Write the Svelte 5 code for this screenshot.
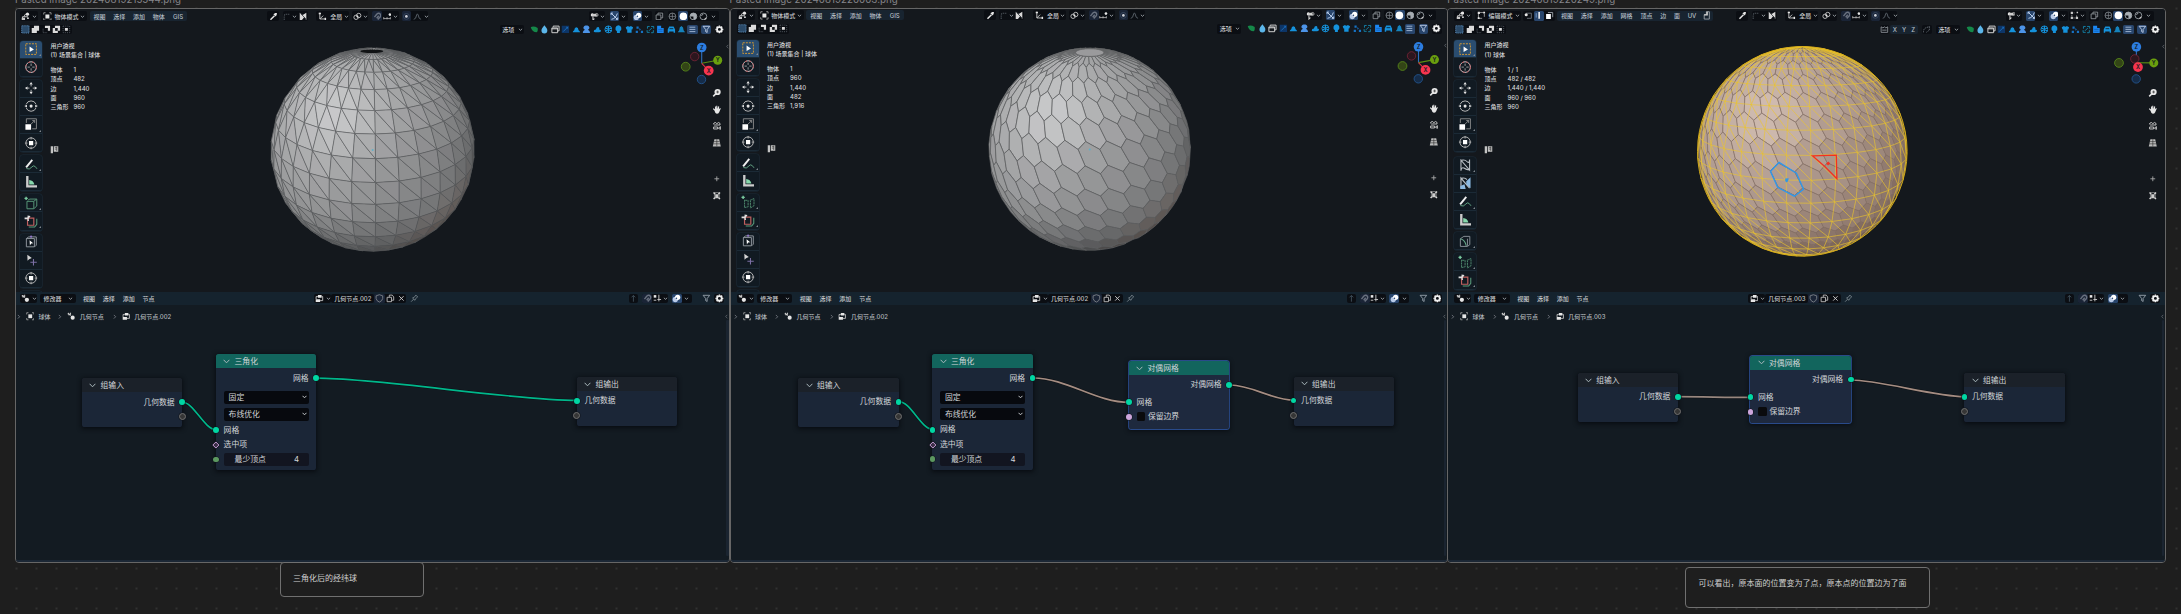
<script>
  const W = '#e6e6e6', B = '#1592dc';
  const s = (d, c = W, w = 1.2, extra = '') => `<path d="${d}" fill="none" stroke="${c}" stroke-width="${w}" ${extra}/>`;
  const f = (d, c = W) => `<path d="${d}" fill="${c}"/>`;
  const c = (x, y, r, col = W) => `<circle cx="${x}" cy="${y}" r="${r}" fill="${col}"/>`;
  const ring = (x, y, r, col = W, w = 1.2, extra = '') => `<circle cx="${x}" cy="${y}" r="${r}" fill="none" stroke="${col}" stroke-width="${w}" ${extra}/>`;
  const dash = (n) => `stroke-dasharray="${n}"`;
  const corners = (col) => s('M1 3.5V1H3.5M8.5 1H11V3.5M11 8.5V11H8.5M3.5 11H1V8.5', col, 1.1);

  const icons = {
    chev: s('M3.2 4.8L6 7.4L8.8 4.8', '#a2a8ae', 1.5),
    right: s('M4 2L8 6L4 10', '#a2a8ae', 1.3),
    left: s('M8 2L4 6L8 10', '#8b9198', 1.3),
    editor: s('M2 9V6.5H9.5M4 6.5L6 3H9', '#c9c9c9', 1.3) + c(8.8, 3, 2.2) + f('M1 8H5.5V11H1Z', '#c9c9c9') + c(9.5, 8.5, 1.2),
    object: f('M3.3 3.3H8.7V8.7H3.3Z') + corners('#aaa'),
    edit: s('M2 4V10M4 2H9M2 10H7M10 4V8', '#bbb', 1) + f('M1 1H4V4H1ZM8.5 1H11V3.5H8.5ZM1 8.5H3.5V11H1Z'),
    dropper: s('M2 10.5L7.5 5', W, 2) + f('M6 3L8.5 1.5L10.8 1.3L10.5 4L9 6.2Z'),
    corner: s('M3 11V6Q3 3 6 3H10', '#4c535a', 1.5, dash('2 1')),
    mask: f('M1 1L5 4L10 1V11L7 7L4 11H1Z', '#d8d8d8') + s('M2 2L10 10', '#20262c', 1),
    axes: s('M2.5 1V9.5H11M2.5 9.5L7 5', '#d0d0d0', 1.2) + f('M1 1H4V3H1ZM9 8H11V11H9Z'),
    pivot: ring(4.2, 7.2, 3, '#c9c9c9') + ring(7.8, 4.8, 3, '#c9c9c9') + c(6, 6, 1),
    magnet: s('M2 7L5 3.2Q8 0.5 10 3Q11.5 5.5 8.5 8L6.5 10.3M5 8.5L7.8 5.2', '#69717f', 1.9),
    snapinc: s('M1 9H10M1 7V10M5.5 7V10M10 7V10', '#bbb', 1.1) + c(9.5, 3.5, 1.8),
    dot: ring(6, 6, 4, '#3f5068', 1) + c(6, 6, 1.8, '#cfd3dc'),
    curve: s('M1 10Q4 10 5 4Q6 1 7 4Q8 10 11 10', '#5a6169', 1.3),
    visible: c(3.2, 4, 2.2) + f('M2 4Q6 1 10 4L8 6H5Z', '#ccc') + s('M4 6V11L6 9', '#d5d5d5', 1.4) + ring(9, 4, 2, '#d5d5d5', 1),
    gizmo: s('M2 10Q8 9 10 2M2 2L10 10M8 10H10.5V7.5M1.5 4V1.5H4', '#cfe2ff', 1.2),
    overlay: c(4.5, 7.5, 3.6, '#b9cbe8') + c(7.7, 4.5, 3.6, '#fff') + c(6, 6, 1.1, '#31507c'),
    meshopt: s('M2.5 2.5V9.5H9V5M2.5 2.5H6', '#aaa', 1, dash('2 1')) + f('M1 1H4V4H1ZM8 8H11V11H8ZM1 8H4V11H1ZM9 1H11V3H9Z', '#c8c8c8'),
    xray: s('M1.5 4H8V10.5H1.5ZM4 4V1.5H10.5V8H8', '#9aa0a6', 1.1),
    wire: ring(6, 6, 4.6, '#80868c') + s('M6 1.5V10.5M1.5 6H10.5', '#80868c', 1),
    solid: c(6, 6, 5.2, '#fff'),
    matprev: ring(6, 6, 4.6, '#a6acb2') + f('M6 1.5A4.5 4.5 0 0 0 1.5 6H6V10.5A4.5 4.5 0 0 0 6 1.5Z', '#a6acb2'),
    render: ring(6, 6, 4.6, '#9aa0a6') + s('M3.4 5.5A3 3 0 0 1 6 3', '#9aa0a6', 1.2) + f('M6 10.5L10 7V10Z', '#ccc'),
    selbox: `<rect x="1" y="1" width="10" height="10" fill="#2b4a68" stroke="#6ea6d8" stroke-width="1" stroke-dasharray="1.5 1"/>`,
    seladd: f('M1 4H4V1H11V8H8V11H1Z', '#dcdcdc'),
    selsub: f('M4 1H11V8H8V4H4Z', '#dcdcdc') + s('M1.5 5V10.5H7', '#626a72', 1, dash('1.5 1')),
    selxor: f('M1 4H4V1H11V8H8V11H1ZM5 5V7.5H7V5Z', '#dcdcdc') + f('M4.2 4.2H7.8V7.8H4.2Z', '#14181d'),
    selint: f('M4 4H8V8H4Z', '#dcdcdc') + s('M1.5 1.5H10.5V10.5H1.5Z', '#626a72', 1, dash('1.5 1.4')),
    vert: s('M3 3H10V10H4', '#767d84', 1.1) + c(3, 5, 2.1),
    edge: s('M7 1.5V10.5', '#fff', 2) + s('M3 3V9', '#8fb2dc', 1),
    face: f('M1.5 4H8V11H1.5Z', '#fff') + s('M4 2H10.5V8.5', '#979da3', 1.3),
    weld: s('M3 11H10V1H6V5H3Z', '#aab0b6', 1.1) + f('M6 1H8V6H3V4.5H6Z', '#cfcfcf'),
    leaf: f('M1 3Q5 1 10.5 4Q11 9 9 10Q3 10 1 3Z', '#158849'),
    drop: f('M6 0.5Q10.2 5.5 10 7.5A4 4 0 0 1 2 7.5Q1.8 5.5 6 0.5Z', '#5cb6ea'),
    windows: s('M3 3V1.5H11V8H9.5M1.2 4H9V10.5H1.2ZM1.2 5.2H9', '#d5d5d5', 1.3),
    tex: f('M1 1H11V11H1Z', '#0d3567') + s('M3 9L9 3M7 3H9V5', '#1b6fbe', 1.2),
    dome: f('M1 10Q1 8 3 7Q3.5 3 6 3Q8.5 3 9 7Q11 8 11 10Z', B),
    person: f('M6 0.8A2.9 2.9 0 0 1 8 6.4Q11 7.5 11 11H1Q1 7.5 4 6.4A2.9 2.9 0 0 1 6 0.8Z', '#4d94e8'),
    cloud: f('M1 9Q1 6 4 6Q5 2 8 3Q9 4 8.5 6Q11 6 11 8.2Q10 10 8 10H3Q1 10 1 9Z', B),
    fan: ring(6, 6, 4.7, B, 1.3) + s('M6 1.5V10.5M2 4L10 8M2 8L10 4', B, 1.6),
    bulb: f('M6 0.5A4.3 4.3 0 0 1 8 8.5V11H4V8.5A4.3 4.3 0 0 1 6 0.5Z', B),
    shirt: f('M1 3L4 1.5Q6 3 8 1.5L11 3L10 6H9V10.5H3V6H2Z', B),
    parts: f('M2 2H5V5H2ZM6 4L8 6L6 8ZM1 8H4V11H1ZM8 8H11V11H8Z', '#1672c4'),
    shuffle: s('M2 5V2H5M7 2H10.5V5M10 7V10.5H7M5 10H1.5V7M4 8L8 4', '#138bb4', 1.2),
    build: f('M1.5 1H7V4H10.5V11H1.5Z', '#1b86f2') + s('M3 6H9M3 8.5H9', '#0c4b8e', .7),
    car: f('M1 6L3 2H9L11 6V10.5H9V9H3V10.5H1Z', B) + s('M3.5 5H8.5', '#0b2a40', 1.3),
    bell: f('M6 1.5Q9 3 9 7L11 10H1L3 7Q3 3 6 1.5Z', '#1583bd'),
    menu: s('M2 3H10M2 6H10M2 9H10', '#b6c9e4', 1.1),
    filter: s('M1.5 1.8H10.5L7 6.2V10.2L5 9V6.2Z', '#c4d3ea', 1.2),
    filterg: s('M1.5 1.8H10.5L7 6.2V10.2L5 9V6.2Z', '#9aa4ae', 1.2),
    gear: ring(6, 6, 3.2, '#f0f0f0', 2.4) + s('M6 .6V2.4M6 9.6V11.4M.6 6H2.4M9.6 6H11.4M2.2 2.2L3.4 3.4M8.6 8.6L9.8 9.8M9.8 2.2L8.6 3.4M2.2 9.8L3.4 8.6', '#f0f0f0', 2),
    mirror: s('M1.5 2.5L4 4L6 2.5L8 4L10.5 2.5V10H1.5ZM3 7H9', '#8f959b', 1.2),
    automerge: s('M2 10Q2 5 5 4L10 2M10 2V7L6 10', '#6b737b', 1.2, dash('2 1')),
    modifier: c(8, 8, 2.9) + s('M2 2L5 5M2 4H5V1', '#c8c8c8', 1.4) + c(2.2, 2.5, 1.3, '#c8c8c8'),
    nodes: f('M4 1.5H9V5H4ZM1 7.2H7V11H1Z') + s('M9 3.5H10.5V9H7M1.5 7V3.5H4', '#c8c8c8', 1.2),
    shield: s('M6 1L10.5 2.5V6Q10 9.5 6 11Q2 9.5 1.5 6V2.5Z', '#7e848a', 1.2),
    copy: s('M1.5 4.5H7.5V10.5H1.5ZM4.5 4V1.5H8.5L10.5 4V8.5H8', '#c0c0c0', 1.2),
    close: s('M3 3L9 9M9 3L3 9', '#c8c8c8', 1.3),
    pin: s('M1.5 10.5L5 7M3.5 5.5L6.8 8.6L7.5 6.5L10.5 4L8 1.5L5.8 4.5Z', '#77848c', 1.2),
    up: s('M6 10.5V2M3.5 4.5L6 2L8.5 4.5', '#3e4d58', 1.3),
    snapgrid: f('M1 1.5H4.5V5H1Z') + s('M8 1V10M6 7.5H11M1 8.5H4.5', '#c5c5c5', 1.3),
    t_select: s('M1.5 1.5H10.5V10.5H1.5Z', '#d59b35', .8, dash('1.7 .9')) + f('M4.7 3.8L8.4 6.3L4.7 8.4Z', '#fff'),
    t_cursor: ring(6, 6, 4.5, '#d8d8d8', .8) + ring(6, 6, 4.5, '#b8484e', .8, dash('1.8 1.8')) + s('M6 3V5M6 7V9M3 6H5M7 6H9', '#ccc', .6),
    t_move: f('M6 .8L7.4 3H4.6ZM6 11.2L7.4 9H4.6ZM.8 6L3 4.6V7.4ZM11.2 6L9 4.6V7.4Z') + s('M6 3V4.6M6 7.4V9M3 6H4.6M7.4 6H9', '#ccc', .7),
    t_rotate: s('M1.8 4.5A4.5 4.5 0 0 1 10.2 4.5M10.2 7.5A4.5 4.5 0 0 1 1.8 7.5', '#bbb', .8) + c(6, 6, 1.3) + f('M.3 6L2.5 4.8V7.2ZM11.7 6L9.5 4.8V7.2Z'),
    t_scale: s('M2 5V1.5H10.5V10H7M6 6L9 3M7 3H9V5', '#999', .7) + f('M1.2 6.2H6V10.8H1.2Z', '#fff'),
    t_xform: ring(6, 6, 4.4, '#bbb', .8) + f('M4.2 4.2H7.8V7.8H4.2Z', '#fff') + s('M6 .8V3M6 9V11.2M.8 6H3M9 6H11.2', '#bbb', .7),
    t_note: s('M1.8 8.7L7 2.4', '#f0f0f0', 1.6) + s('M2 9.8Q5 10.8 6 9Q8 6.5 9.4 8L11 10', '#65a786', .8),
    t_measure: f('M1.8 .8H3.8V8.7H11V10.6H1.8Z', '#ccc') + f('M4.4 4.2Q8 4.5 8.8 8.1H4.4Z', '#86d7ab'),
    t_cube: s('M2.5 4.5H8.3V10.8H2.5ZM3.2 3.5L5 2.6H10.8V8.5L8.6 10.5M8.5 4.3L10.5 2.8', '#5a9c7c', .8) + s('M1.8 .6V3.4M.4 2H3.2', '#79c89e', 1.2),
    t_cubes: s('M3 4V10.6M3 10.6L6 10V4.5H3M7.5 4.6L11 3V9L8 11V5', '#4f8a6e', .8, dash('1.8 .5')) + s('M1.8 .6V3.4M.4 2H3.2', '#79c89e', 1.2),
    t_bool: s('M3 3.5H8.3V9.5H3Z', '#c0605f', 1) + s('M4 11H9L10.8 8.7V4', '#5a9c7c', .9) + f('M.5 3H3V1.2L5.5 1.6L4 4L4.2 6H3V4.5H.5Z', '#dedede'),
    t_cage: s('M2 3H8.8V10H2ZM2 3L4 1.6H10.4V8.6L9 10', '#9298a0', .8) + f('M4.7 4.5L7.8 7L6 7.2L5 8.8Z', '#fff') + c(6, 1.4, .9, '#9278c9'),
    t_arrow: f('M2.8 1.5L6.6 4.3L4.3 5.2L3 6.6Z', '#d5d5d5') + s('M8 5V10.6M5.4 7.8H10.8', '#7c6fa5', .9),
    t_bend: s('M2.5 10.8V1.8L9.8 10.2V1.2M2.5 2Q6 1 7.5 3Q9 5 9.8 2M2.5 10.5Q3 7.5 5 8.5Q7 10 9.8 10.2', '#b9bfc5', .9),
    t_bendb: s('M2.5 10.8V1.8L9.8 10.2M2.5 2Q6 1 7.5 3', '#b9bfc5', 1) + f('M7 4.5L10.6 1V10.4L7 7ZM2 8.4L5.5 7L6.5 11H2Z', '#8bb9e2'),
    t_poly: s('M2 4L5 2H10V9L8 10.5H2ZM8 4V10', '#8b9198', .8) + s('M2 4Q6 5 7 10', '#66a688', .9),
    magnify: c(7, 5, 3.9) + s('M1.5 10.5L5 7', W, 1.9) + s('M5.3 5H8.7M7 3.3V6.7', '#333', .9),
    hand: f('M3 7L1 5L2.2 4L3.8 5.5V2L5 2L5.3 5V1H6.6L6.8 5L7.8 1.6L9 2L8.6 5.5L10 3.8L11 4.5L9 9Q8 11 6 11Q4 11 3 7Z'),
    camera: s('M2.5 2.5Q5 .8 6 3.5Q8 .5 10 3V5H3Q1 4 2.5 2.5M2 7.5H7V10H2ZM8 9L10.5 7V10.5Z', '#c5c5c5', 1.2),
    persp: f('M3 1.5H9L11 10.5H1Z', '#bababa') + s('M6 1.5V10.5M2.5 4.5H9.5M1.7 7.3H10.3', '#222', .7),
    plus: s('M6 3V9M3 6H9', '#adadad', 1.1),
    frame: s('M2 2L4 4M10 2L8 4M2 10L4 8M10 10L8 8', '#ddd', 1.8) + f('M4 4H8V9H4Z', '#ccc') + s('M2 2H10M3 4V9M9 4V9', '#aaa', .8),
    panelicon: f('M1 1.5H4V11H1ZM5 1.5H11V9H5Z', '#c4c4c4') + s('M6.5 3.5H9.5M6.5 5.5H9.5M9 2V8', '#333', .8)
  };

  // Header layout: each group is [gap before, style, cells]; each cell is [icon or text, width].
  const midGroups = [
    [3.3, 'dark', [['corner', 8], ['chev', 8], ['mask', 9]]],
    [8.7, 'dark', [['axes', 13], ['=全局', 14], ['chev', 6]]],
    [3, 'dark', [['pivot', 11], ['chev', 5]]],
    [3.7, 'dark', [['magnet', 10, 'navy'], ['snapinc', 10], ['chev', 6.6]]],
    [3.7, 'dark', [['dot', 8.6, 'navy'], ['curve', 13.4], ['chev', 4]]]
  ];
  const objectLeft = [
    [0, 'dark', [['editor', 11], ['chev', 6.5]]],
    [3, 'dark', [['object', 13.3], ['=物体模式', 24.5], ['chev', 8.5]]],
    [2.4, 'menu', [['=视图', 19.8], ['=选择', 19.8], ['=添加', 19.8], ['=物体', 19.8], ['=GIS', 18.5]]],
    [80, 'dark', [['dropper', 12]]],
    ...midGroups
  ];
  const editLeft = [
    [0, 'dark', [['editor', 11], ['chev', 6.5]]],
    [3, 'dark', [['edit', 13.3], ['=编辑模式', 24.5], ['chev', 8.5]]],
    [1.7, 'dark', [['vert', 10.6], ['edge', 10.6, 'blue'], ['face', 10.6]]],
    [2.2, 'menu', [['=视图', 19.9], ['=选择', 19.9], ['=添加', 19.9], ['=网格', 19.9], ['=顶点', 19.9], ['=边', 13.8], ['=面', 13.8], ['=UV', 16], ['weld', 13]]],
    [23.4, 'dark', [['dropper', 12]]],
    ...midGroups
  ];
  const shading = [3.4, 'dark', [['wire', 10.3], ['solid', 10.3, 'blue'], ['matprev', 10.3], ['render', 10.3], ['chev', 10]]];
  const rightStart = [
    [0, 'dark', [['visible', 10], ['chev', 6]]],
    [4.5, 'dark', [['gizmo', 9, 'blue'], ['chev', 9]]],
    [5, 'dark', [['overlay', 9, 'blue'], ['chev', 10]]]
  ];
  const objectRight = [...rightStart, [3.6, 'dark', [['xray', 9]]], shading];
  const editRight = [...rightStart, [1, 'dark', [['meshopt', 10], ['chev', 7]]], [3, 'dark', [['xray', 10]]], shading];
  const selRow = [[0, 'dark', ['selbox', 'seladd', 'selsub', 'selxor', 'selint'].map((n) => [n, 10.3])]];
  const addons = ['leaf', 'drop', 'windows', 'tex', 'dome', 'person', 'cloud', 'fan', 'bulb', 'shirt', 'parts', 'shuffle', 'build', 'car', 'bell'];
  const optRow = [
    [0, 'dark', [['=选项', 17], ['chev', 7]]],
    [5, '', [...addons.map((n) => [n, 10.55]), ['menu', 10.55, 'blue']]],
    [3.6, 'blue', [['filter', 9.4]]],
    [4, 'dark', [['gear', 9.4]]]
  ];
  const symRow = [
    [0, 'dark', [['mirror', 9]]],
    [1, 'menu', [['=X', 9.2], ['=Y', 9.2], ['=Z', 9.2]]],
    [4, 'dark', [['automerge', 10]]],
    [4, '', []],
    ...optRow
  ];
  const nodeLeft = [
    [0, 'dark', [['modifier', 11], ['chev', 6]]],
    [2.7, 'dark', [['=修改器', 25], ['chev', 10.5]]],
    [3.6, '', [['=视图', 19.8], ['=选择', 19.8], ['=添加', 19.8], ['=节点', 19.8]]]
  ];
  const nodeMid = (name) => [
    [156, 'dark', [['nodes', 11], ['chev', 6]]],
    [0, 'dark', [['=' + name, 43]]],
    [0, 'dark', [['shield', 10.7, 'navy'], ['copy', 10.7], ['close', 10.7]]],
    [2.7, '', [['pin', 10]]]
  ];
  const nodeRight = [
    [0, 'dark', [['up', 9]]],
    [4, 'dark', [['magnet', 10, 'navy'], ['snapgrid', 10], ['chev', 6]]],
    [3.6, 'dark', [['overlay', 9.6, 'blue'], ['chev', 10.4]]],
    [9, '', [['filterg', 10.5]]],
    [3, 'dark', [['gear', 10]]]
  ];

  const objectTools = [['t_select', 't_cursor'], ['t_move', 't_rotate', 't_scale', 't_xform'], ['t_note', 't_measure'], ['t_cube', 't_bool'], ['t_cage', 't_arrow', 't_xform']];
  const dualTools = objectTools.map((g) => g.map((n) => (n === 't_cube' ? 't_cubes' : n)));
  const editTools = [['t_select', 't_cursor'], ['t_move', 't_rotate', 't_scale', 't_xform'], ['t_bend', 't_bendb', 't_note', 't_measure'], ['t_poly'], ['t_cubes', 't_bool']];
  const flyouts = ['t_select', 't_scale', 't_note', 't_cube', 't_cubes', 't_bool', 't_bend', 't_poly'];

  // 32 x 16 UV sphere in a perspective camera
  const DIST = 4.876, STEP = Math.PI / 16;
  function sphere(kind, cx, cy, r, elev, azim) {
    const F = (r / 102) * 486.8;
    const e = (elev * Math.PI) / 180, az = (azim * Math.PI) / 180;
    const point = (i, j) => {
      const lat = Math.PI / 2 - j * STEP, lon = i * STEP + az;
      const x = Math.cos(lat) * Math.sin(lon), y = Math.sin(lat), z = Math.cos(lat) * Math.cos(lon);
      return [x, y * Math.cos(e) - z * Math.sin(e), y * Math.sin(e) + z * Math.cos(e)];
    };
    const mean = (ps) => [0, 1, 2].map((k) => ps.reduce((a, p) => a + p[k], 0) / ps.length);
    const unit = (v) => { const l = Math.hypot(...v) || 1; return v.map((q) => q / l); };
    const proj = (p) => [cx + (F * p[0]) / (DIST - p[2]), cy - (F * p[1]) / (DIST - p[2])];
    const facing = (m) => { const n = unit(m); return n[2] * (DIST - m[2]) - n[0] * m[0] - n[1] * m[1] > 0; };
    const path = (ps) => 'M' + ps.map((p) => proj(p).map((v) => v.toFixed(1)).join(' ')).join('L') + 'Z';

    const up = (i, j) => (j === 0 ? mean([point(0, 0), point(i, 1), point(i + 1, 1)]) : mean([point(i, j), point(i + 1, j), point(i + 1, j + 1)]));
    const low = (i, j) => (j === 15 ? mean([point(0, 16), point(i, 15), point(i + 1, 15)]) : mean([point(i, j), point(i, j + 1), point(i + 1, j + 1)]));
    const tris = [], duals = [];
    for (let j = 0; j < 16; j++) for (let i = 0; i < 32; i++) {
      if (j < 15) tris.push([point(i, j), point(i, j + 1), point(i + 1, j + 1)]);
      if (j > 0) tris.push([point(i, j), point(i + 1, j), point(i + 1, j + 1)]);
    }
    for (let j = 1; j < 16; j++) for (let i = 0; i < 32; i++) {
      const ring = [];
      if (j > 1) ring.push(up(i - 1, j - 1), low(i, j - 1)); else ring.push(up(i - 1, 0), up(i, 0));
      if (j < 15) ring.push(up(i, j), low(i, j), up(i - 1, j)); else ring.push(low(i, 15), low(i - 1, 15));
      if (j > 1) ring.push(low(i - 1, j - 1));
      duals.push(order(ring, point(i, j)));
    }
    duals.push(Array.from({ length: 32 }, (_, i) => up(i, 0)));

    function order(ps, centre) {
      const n = unit(centre), a = unit([n[2], 0, -n[0]]);
      const b = [n[1] * a[2] - n[2] * a[1], n[2] * a[0] - n[0] * a[2], n[0] * a[1] - n[1] * a[0]];
      const ang = (p) => Math.atan2(p[0] * b[0] + p[1] * b[1] + p[2] * b[2], p[0] * a[0] + p[1] * a[1] + p[2] * a[2]);
      return [...ps].sort((p, q) => ang(p) - ang(q));
    }
    function shade(m) {
      const n = unit(m);
      const d = -0.27 * n[0] + 0.27 * n[1] + 0.92 * n[2];
      let v = 0.2 + 0.44 * Math.pow(d * 0.5 + 0.5, 1.5) + 0.1 * Math.pow(Math.max(0, d), 14);
      v += 0.09 * Math.max(0, -n[0]) + 0.08 * Math.max(0, n[1]) - 0.14 * Math.max(0, -n[1] - 0.5);
      const warm = Math.max(0, n[0] - n[1] - 0.95) * 0.16;
      let rgb = [v + warm * 0.5, v + 0.003, v - warm * 0.3 + 0.008];
      if (kind === 'edit') rgb = [v * 0.72 + 0.25, v * 0.74 + 0.155, v * 0.74 + 0.11];
      return `rgb(${rgb.map((q) => Math.round(q * 255)).join(',')})`;
    }
    const faces = (list) => list.map((ps) => ({ ps, m: mean(ps) })).filter((q) => facing(q.m)).map((q) => ({ d: path(q.ps), fill: shade(q.m) }));
    const base = faces(kind === 'tri' ? tris : duals);
    const wire = kind === 'edit' ? faces(tris).map((q) => q.d).join('') : '';
    return { kind, base, wire, cx, cy, r };
  }
  const edges = { tri: ['#56595b', 0.5], dual: ['#5e6062', 0.7], edit: ['#897469', 0.65] };

  const input = (x, y) => ({ type: 'input', x, y });
  const panels = [
    {
      file: 'Pasted image 20240819215544.png', x: 15, w: 715, pad: 4.4, dy: 0, right: 10.2,
      left1: objectLeft, right1: objectRight, row2: optRow, tools: objectTools, title: '(1) 场景集合 | 球体',
      stats: [['物体', '1'], ['顶点', '482'], ['边', '1,440'], ['面', '960'], ['三角形', '960']],
      tree: '几何节点.002', ball: sphere('tri', 372.6, 149.7, 102, 26.6, 1.4), gz: [701.7, 63.3, 16, -3, 7, 7.3],
      nodes: [input(82, 378.3), { type: 'tri', x: 216, y: 354.3 }, { type: 'output', x: 576.8, y: 377 }],
      links: [['#00b78b', 182, 402, 216, 429.6, 0.35], ['#00b78b', 316.3, 378.2, 576.8, 400.4, 0.25]]
    },
    {
      file: 'Pasted image 20240819220003.png', x: 729.5, w: 718, pad: 6.6, dy: -0.8, right: 11,
      left1: objectLeft, right1: objectRight, row2: optRow, tools: dualTools, title: '(1) 场景集合 | 球体',
      stats: [['物体', '1'], ['顶点', '960'], ['边', '1,440'], ['面', '482'], ['三角形', '1,916']],
      tree: '几何节点.002', ball: sphere('dual', 1089.2, 149.2, 101.8, 26.6, 1.4), gz: [1418, 62.6, 16, -3, 7, 7.3],
      nodes: [input(798.4, 378), { type: 'tri', x: 932.4, y: 354.2 }, { type: 'dual', x: 1129, y: 361 }, { type: 'output', x: 1293.5, y: 376.8 }],
      links: [['#00b78b', 898.4, 401.6, 932.4, 429.5, 0.35], ['#a58d82', 1032.7, 378, 1129, 402.4, 0.35], ['#a58d82', 1229.5, 385, 1293.5, 400.2, 0.35]]
    },
    {
      file: 'Pasted image 20240819220249.png', x: 1447.3, w: 718.7, pad: 6.2, dy: -0.2, right: 11,
      left1: editLeft, right1: editRight, row2: symRow, tools: editTools, title: '(1) 球体', spaced: 2,
      stats: [['物体', '1 / 1'], ['顶点', '482 / 482'], ['边', '1,440 / 1,440'], ['面', '960 / 960'], ['三角形', '960']],
      tree: '几何节点.003', ball: sphere('edit', 1802.6, 151.3, 104.8, 13.1, 4), gz: [2136.7, 62.7, 17.4, 0.2, 1.6, 4.4],
      nodes: [input(1577.7, 373), { type: 'dual', x: 1750.5, y: 355.8 }, { type: 'output', x: 1964.4, y: 373 }],
      links: [['#98877f', 1677.7, 396.7, 1750.5, 397.4, 0.35], ['#a58d82', 1851, 380, 1964.4, 396.6, 0.25]]
    }
  ];
  const notes = [
    { x: 279.6, y: 562, w: 144.6, h: 35.2, pad: 8, text: '三角化后的经纬球' },
    { x: 1685.2, y: 567, w: 244.4, h: 41, pad: 7.6, text: '可以看出，原本面的位置变为了点，原本点的位置边为了面' }
  ];
  const curve = ([, x1, y1, x2, y2, k]) => { const q = (x2 - x1) * k; return `M${x1} ${y1}C${x1 + q} ${y1} ${x2 - q} ${y2} ${x2} ${y2}`; };
  const navs = [['magnify', 0], ['hand', 0], ['camera', 0], ['persp', 0], ['plus', 20], ['frame', 0]];
</script>

{#snippet icon(name, size = 8.6)}
  <svg class="icon" width={size} height={size} viewBox="0 0 12 12">{@html icons[name]}</svg>
{/snippet}

{#snippet groups(list)}
  {#each list as [gap, look, cells]}
    <div class="group {look}" style:margin-left="{gap}px">
      {#each cells as [name, width, tint]}
        <span class="cell {tint ?? ''}" style:width="{width}px">
          {#if name[0] === '='}{name.slice(1)}{:else}{@render icon(name, name === 'chev' ? 7 : 8.8)}{/if}
        </span>
      {/each}
    </div>
  {/each}
{/snippet}

{#snippet nodeHead(title, green)}
  <header class:green>
    <svg width="7" height="5" viewBox="0 0 7 5"><path d="M.6 .8L3.5 3.8L6.4 .8" fill="none" stroke="#a9b7bb" stroke-width="1" /></svg>{title}
  </header>
{/snippet}

<main class="canvas">
  {#each panels as p}
    <article class="card" style:left="{p.x}px" style:width="{p.w}px">
      <div class="file">{p.file}</div>
      <div class="frame">
        <section class="viewport">
          <svg class="scene" style:width="{p.w}px" viewBox="{p.x + 1} 9 {p.w} 283">
            {#each p.ball.base as face}
              <path d={face.d} fill={face.fill} stroke={edges[p.ball.kind][0]} stroke-width={edges[p.ball.kind][1]} stroke-linejoin="round" />
            {/each}
            {#if p.ball.kind === 'edit'}
              <path d={p.ball.wire} fill="none" stroke="#efc62c" stroke-opacity=".6" stroke-width=".6" />
              <circle cx={p.ball.cx} cy={p.ball.cy} r={p.ball.r} fill="none" stroke="#d3aa1c" stroke-width="1" />
              <path d="M1779.3 162.4L1796.7 173.2L1803.8 189.3L1794.7 196.2L1778 187.3L1770.8 171.3Z" fill="none" stroke="#2f97ea" stroke-width="1.4" />
              <path d="M1785.5 178.6L1789 178.2L1788.4 181.2L1786.8 182.4L1785.5 181Z" fill="#2f97ea" />
              <path d="M1812.7 155.8L1836.6 155.1L1837.2 178.8Q1826 166.5 1812.7 155.8Z" fill="none" stroke="#f5301f" stroke-width="1.3" />
              <path d="M1828.6 161.4L1830.6 163.6L1828.3 165.4L1826.5 163.4Z" fill="#f5301f" />
            {:else}
              {#if p.ball.kind === 'tri'}<ellipse cx={p.ball.cx - 0.8} cy="51.2" rx="11.5" ry="1.7" fill="#111315" />{/if}
              <circle cx={p.ball.cx} cy={p.ball.cy + 0.4} r="1" fill="#5db0c9" />
            {/if}
            <g transform="translate({p.gz[0]} {p.gz[1]})">
              <path d="M0 0V-15" stroke="#2d6fc0" stroke-width="1.1" />
              <path d="M0 0L{p.gz[2]} {p.gz[3]}" stroke="#5a8e12" stroke-width="1.1" />
              <path d="M0 0L{p.gz[4]} {p.gz[5]}" stroke="#d9334a" stroke-width="1.1" />
              <circle cx={-p.gz[4]} cy={-p.gz[5] + 0.6} r="4.2" fill="#2c161e" stroke="#722235" stroke-width=".9" />
              <circle cx={-p.gz[2]} cy={-p.gz[3] + 0.4} r="4.4" fill="#334516" stroke="#56851a" stroke-width=".9" />
              <circle cx="-.2" cy="16.2" r="4.2" fill="#152c49" stroke="#22538c" stroke-width=".9" />
              <circle cx="0" cy="-15.8" r="4.8" fill="#2c7de0" />
              <circle cx={p.gz[2]} cy={p.gz[3]} r="4.5" fill="#6a9f0e" />
              <circle cx={p.gz[4]} cy={p.gz[5]} r="4.9" fill="#f7354f" />
              <text x="0" y="-13.8">Z</text><text x={p.gz[2]} y={p.gz[3] + 2}>Y</text><text x={p.gz[4]} y={p.gz[5] + 2}>X</text>
            </g>
          </svg>
          <div class="ui" style:margin-top="{p.dy}px" style:padding-left="{p.pad}px">
            <div class="bar" style:padding-right="{p.right}px">{@render groups(p.left1)}<i></i>{@render groups(p.right1)}</div>
            <div class="bar second">{@render groups(selRow)}<i></i>{@render groups(p.row2)}</div>
            <div class="body">
              <div class="tools">
                {#each p.tools as group, g}
                  <div class="toolgroup" class:spaced={p.spaced === g}>
                    {#each group as tool, t}
                      <div class="tool" class:active={g + t === 0} class:flyout={flyouts.includes(tool)}>{@render icon(tool, 14.2)}</div>
                    {/each}
                  </div>
                {/each}
                <div class="toolgroup more"></div>
              </div>
              <div class="info">
                <div>用户透视</div>
                <div>{p.title}</div>
                <dl>{#each p.stats as [k, v]}<dt>{k}</dt><dd>{v}</dd>{/each}</dl>
                <div class="mini">{@render icon('panelicon', 9)}</div>
              </div>
              <i></i>
              <div class="nav">
                {#each navs as [n, gap]}
                  <div class="navbtn" style:margin-top="{gap}px">{@render icon(n, 9.6)}</div>
                {/each}
              </div>
              <div class="expand">{@render icon('left', 5)}</div>
            </div>
          </div>
        </section>
        <section class="editor">
          <div class="bar nodebar" style:padding-left="{p.pad}px">
            {@render groups(nodeLeft)}{@render groups(nodeMid(p.tree))}<i></i>{@render groups(nodeRight)}
          </div>
          <div class="crumbs" style:margin-left="{p.pad - 4.4}px">
            {@render icon('right', 5.5)}<b></b>{@render icon('object', 8.5)}<span>球体</span>{@render icon('right', 5.5)}<b></b>{@render icon('modifier', 8.5)}<span>几何节点</span>{@render icon('right', 5.5)}<b></b>{@render icon('nodes', 8.5)}<span>{p.tree}</span><i></i>{@render icon('left', 5)}
          </div>
          <div class="scrollbar"></div>
        </section>
        <svg class="links" style:width="{p.w}px" viewBox="{p.x + 1} 9 {p.w} 553">
          {#each p.links as link}
            <path d={curve(link)} fill="none" stroke="#0b1015" stroke-width="2.8" />
            <path d={curve(link)} fill="none" stroke={link[0]} stroke-width="1.7" />
          {/each}
        </svg>
        {#each p.nodes as n}
          <div class="node {n.type}" style:left="{n.x - p.x - 1}px" style:top="{n.y - 9}px">
            {#if n.type === 'input'}
              {@render nodeHead('组输入')}
              <div class="row out">几何数据<em class="teal"></em></div>
              <div class="row out"><em class="grey"></em></div>
            {:else if n.type === 'output'}
              {@render nodeHead('组输出')}
              <div class="row"><em class="teal"></em>几何数据</div>
              <div class="row"><em class="grey"></em></div>
            {:else if n.type === 'tri'}
              {@render nodeHead('三角化', true)}
              <div class="row out gap">网格<em class="teal"></em></div>
              {#each ['固定', '布线优化'] as option}
                <div class="row pick"><div class="select">{option}<svg width="5" height="4" viewBox="0 0 5 4"><path d="M.5 .8L2.5 2.8L4.5 .8" fill="none" stroke="#c5c9cc" /></svg></div></div>
              {/each}
              <div class="row"><em class="teal"></em>网格</div>
              <div class="row"><em class="diamond"></em>选中项</div>
              <div class="row"><em class="leafgreen"></em><div class="field"><span>最少顶点</span><span>4</span></div></div>
            {:else}
              {@render nodeHead('对偶网格', true)}
              <div class="row out gap">对偶网格<em class="teal"></em></div>
              <div class="row"><em class="teal"></em>网格</div>
              <div class="row"><em class="pink"></em><div class="check"></div>保留边界</div>
            {/if}
          </div>
        {/each}
      </div>
    </article>
  {/each}
  {#each notes as n}
    <div class="note" style:left="{n.x}px" style:top="{n.y}px" style:width="{n.w}px" style:height="{n.h}px" style:padding-top="{n.pad}px">{n.text}</div>
  {/each}
</main>

<style>
  :global(body) { background: #1e1e1e; overflow: hidden; }
  .canvas {
    position: relative; width: 2181px; height: 614px; overflow: hidden;
    background: radial-gradient(circle at 10px 10px, #3b3b3b 0.5px, transparent 1.1px) 6.5px -1.5px / 20px 20px #1e1e1e;
    font-family: Inter, "Noto Sans CJK SC", sans-serif; color: #c5c8cb;
  }
  .card { position: absolute; top: 8px; height: 554.5px; }
  .file { position: absolute; left: 0; top: -14.5px; font-size: 9.75px; line-height: 12px; color: #85858a; white-space: nowrap; }
  .frame {
    box-sizing: border-box; width: 100%; height: 100%; position: relative; overflow: hidden;
    display: flex; flex-direction: column; border: 1px solid #666; border-radius: 4px; background: #131b22;
  }
  .viewport { position: relative; height: 283px; background: #14181d; overflow: hidden; flex: none; }
  .scene { position: absolute; left: 0; top: 0; height: 283px; }
  .scene text { font: 600 5.5px Inter, sans-serif; fill: #101820; text-anchor: middle; }
  .ui { position: relative; }
  i { flex: 1; }
  .icon { display: block; flex: none; }
  .bar { display: flex; align-items: center; height: 14px; font-size: 6px; font-weight: 500; white-space: nowrap; }
  .bar.second { height: 13.4px; padding-right: 5px; }
  .group { display: flex; align-items: center; height: 9.6px; border-radius: 2px; }
  .cell { display: flex; align-items: center; justify-content: center; height: 9.6px; border-radius: 1.5px; flex: none; }
  .dark { background: #0b0e13; }
  .menu { background: #182430; color: #b3bcc4; }
  .blue { background: #28456c; }
  .navy { background: #1a2436; }
  .body { display: flex; align-items: flex-start; padding-top: 4.2px; }
  .tools { width: 22px; display: flex; flex-direction: column; gap: 3px; margin-left: -.4px; }
  .toolgroup { display: flex; flex-direction: column; flex: none; border-radius: 3px; background: #111a22; box-shadow: 0 0 0 .6px #1b2b38; overflow: hidden; }
  .toolgroup.spaced { margin-top: 1.9px; }
  .toolgroup.more { height: 6px; }
  .tool { position: relative; height: 18.1px; display: flex; align-items: center; justify-content: center; border-bottom: .3px solid #1b2a36; box-sizing: border-box; }
  .tool.active { background: #2a4d70; }
  .flyout::after { content: ''; position: absolute; right: 1px; bottom: 1.5px; border-left: 2.2px solid transparent; border-bottom: 2.2px solid #7f868d; }
  .info { font-size: 6px; font-weight: 500; line-height: 9.4px; padding: 0 0 0 8.4px; white-space: nowrap; color: #d4d6d8; }
  dl { display: grid; grid-template-columns: 23px auto; margin: 5.6px 0 0; }
  dt, dd { margin: 0; line-height: 9.28px; }
  .mini { margin-top: 33.8px; }
  .nav { display: flex; flex-direction: column; padding-top: 44.2px; margin-right: 7px; }
  .navbtn { height: 16.5px; display: flex; align-items: center; justify-content: center; width: 11px; }
  .expand { padding-top: 3.6px; margin: 0 -1px 0 -4px; }
  .editor { position: relative; flex: 1; border-bottom: 2px solid #1b2735; }
  .nodebar { height: 13.4px; background: #15232e; padding-right: 4.6px; }
  .crumbs { display: flex; align-items: center; height: 11px; margin-top: 5.4px; font-size: 6px; font-weight: 500; white-space: nowrap; color: #b4b9bd; }
  .crumbs b { width: 4.4px; }
  .crumbs span { margin: 0 8px 0 4px; }
  .crumbs span:first-of-type { margin-right: 7px; }
  .scrollbar { position: absolute; right: .5px; top: 28px; bottom: 4px; width: 2.4px; border-radius: 1px; background: #1a2430; }
  .links { position: absolute; left: 0; top: 0; height: 553px; }
  .node {
    position: absolute; box-sizing: border-box; width: 100.2px; height: 49px; border-radius: 2.6px;
    background: #1b2637; box-shadow: 0 1px 4px 1px #090d12; font-size: 7.8px; line-height: 14.75px; color: #d3d6d9; white-space: nowrap;
  }
  .node.tri { height: 115.4px; }
  .node.dual { height: 67.6px; background: #1e293e; box-shadow: 0 0 0 .9px #294a8a, 0 1px 4px 1px #090d12; }
  .node header { display: flex; align-items: center; gap: 4.4px; height: 14.2px; margin-bottom: 2.2px; padding-left: 7.2px; border-radius: 2.6px 2.6px 0 0; background: #1b2129; }
  .node header.green { background: #12655d; }
  .row { position: relative; display: flex; align-items: center; height: 14.75px; padding: 0 7.6px; }
  .row.out { justify-content: flex-end; }
  .tri .gap { margin-bottom: 3.4px; }
  .dual .gap { margin-bottom: 2.6px; }
  .row.pick { height: 16.9px; }
  .select { flex: 1; display: flex; align-items: center; justify-content: space-between; height: 12.8px; padding: 0 2px 0 5px; border-radius: 2px; background: #07090e; }
  .field { flex: 1; display: flex; align-items: center; justify-content: space-between; height: 13.2px; padding: 0 9.5px 0 11px; border-radius: 2px; background: #121520; }
  .check { width: 8.8px; height: 8.8px; border-radius: 1.5px; background: #0a0b0d; margin-right: 2.6px; }
  em { position: absolute; left: -2.9px; top: 4.5px; width: 5.8px; height: 5.8px; border-radius: 50%; box-sizing: border-box; box-shadow: 0 0 0 .5px #10151c; }
  .out em { left: auto; right: -2.9px; }
  .teal { background: #00d6a3; }
  .grey { background: #363636; border: 1.1px solid #707070; width: 7px; height: 7px; margin: -.6px; }
  .pink { background: #cda6dc; }
  .leafgreen { background: #5c9860; }
  .diamond { background: #3b2e48; border: 1.5px solid #cda6dc; border-radius: 0; transform: rotate(45deg) scale(.85); }
  .note {
    position: absolute; box-sizing: border-box; border: 1px solid #707070; border-radius: 4px; background: #1e1e1e;
    padding-left: 12.4px; font-size: 8px; line-height: 15px; color: #d0d0d0; white-space: nowrap;
  }
</style>
